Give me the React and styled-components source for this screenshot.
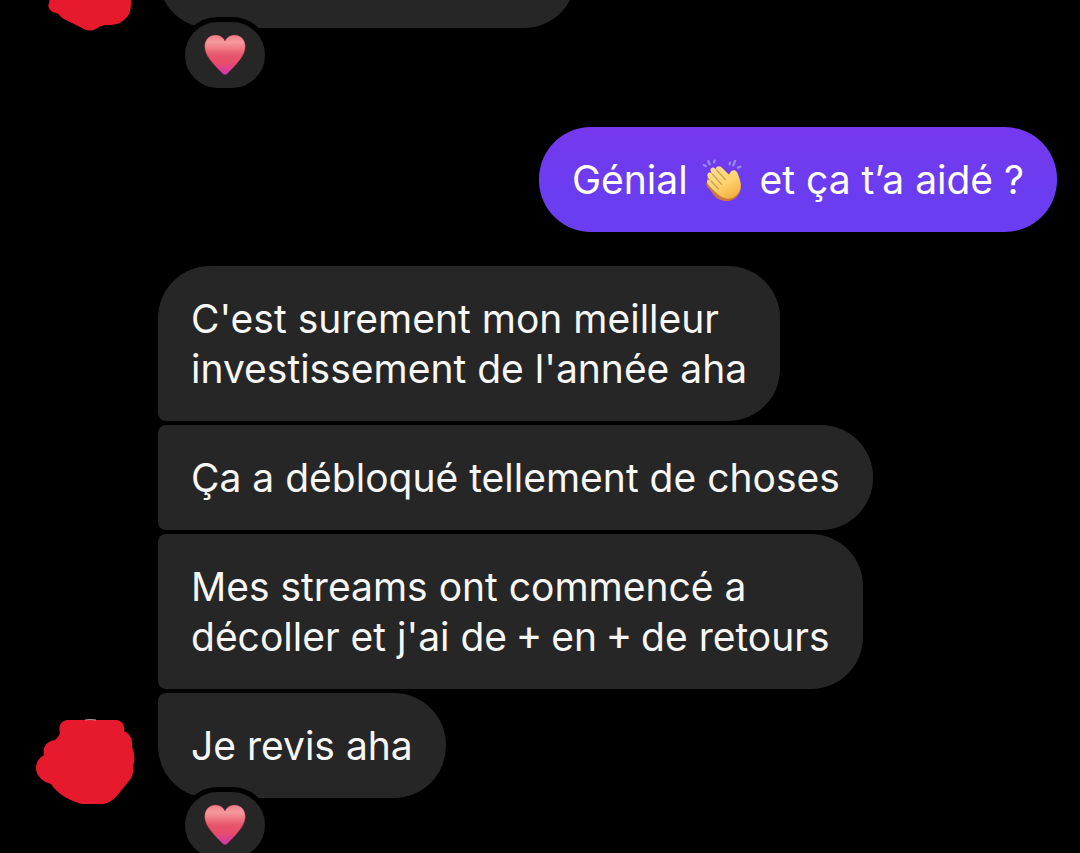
import React from "react";
import styled, { createGlobalStyle, css } from "styled-components";

const GlobalStyle = createGlobalStyle`
  *, *::before, *::after { box-sizing: border-box; }
  html, body { margin: 0; background: #000; }
`;

const Chat = styled.main`
  display: flex;
  flex-direction: column;
  height: 100vh;
  overflow: hidden;
  background: #000;
  color: #f7f7f7;
  font: 400 39px/50px Inter, Roboto, "Liberation Sans", sans-serif;
`;

const Thread = styled.ol`
  display: flex;
  flex-direction: column;
  gap: 34px;
  margin: -77px 0 0;
  padding: 0 23px 0 0;
  list-style: none;
`;

const Group = styled.li`
  display: flex;
  flex-direction: column;
  flex-shrink: 0;
  align-items: ${(p) => (p.$mine ? "flex-end" : "stretch")};
  gap: 4px;
`;

const Row = styled.div`
  display: grid;
  grid-template-columns: 158px 1fr;
  align-items: end;
  justify-items: start;
`;

const Avatar = styled.svg`
  display: block;
  width: 158px;
  height: 105px;
  overflow: visible;
  fill: #e6192d;
`;

const corners = {
  single: "52px",
  first: "52px 52px 52px 8px",
  middle: "8px 52px 52px 8px",
  last: "8px 52px 52px 52px",
};

const Bubble = styled.p`
  grid-column: 2;
  margin: 0;
  padding: 28px 33px 27px;
  min-height: 105px;
  min-width: ${(p) => p.$minWidth || "0"};
  border-radius: ${(p) => corners[p.$place || "single"]};
  background: #262626;
  ${(p) =>
    p.$mine &&
    css`
      background: linear-gradient(#7638ee, #6b3df0 60%);
      color: #fff;
    `}
`;

const Line = styled.span`
  display: block;
`;

const Plus = styled.span`
  font-family: Roboto, Inter, sans-serif;
  line-height: 1;
`;

const Reaction = styled.button`
  grid-column: 2;
  display: flex;
  align-items: center;
  justify-content: center;
  width: 90px;
  height: 76px;
  margin: -11px 0 0 22px;
  padding: 0;
  border: 5px solid #000;
  border-radius: 38px;
  background: #262626;
  z-index: 1;
`;

const HeartIcon = styled.svg`
  width: 42px;
  height: 42px;
`;

const ClapIcon = styled.svg`
  display: inline-block;
  width: 50px;
  height: 48px;
  vertical-align: -10px;
`;

function Heart({ id }) {
  return (
    <HeartIcon viewBox="0 0 126 126" aria-hidden="true">
      <defs>
        <linearGradient id={id} x1="0" y1="0" x2="0" y2="1">
          <stop offset="0" stopColor="#ee7c85" />
          <stop offset="0.18" stopColor="#f59a9c" />
          <stop offset="0.36" stopColor="#ee7480" />
          <stop offset="0.5" stopColor="#e5566c" />
          <stop offset="0.7" stopColor="#e74d6a" />
          <stop offset="0.86" stopColor="#dc3f93" />
          <stop offset="1" stopColor="#c93bb0" />
        </linearGradient>
      </defs>
      <path
        d="M63 21C57 8 46 3 33 3C15 3 2 18 2 37C2 57 14 74 29 91C39 102 49 112 57 120Q63 125 69 120C77 112 87 102 97 91C112 74 124 57 124 37C124 18 111 3 93 3C80 3 69 8 63 21Z"
        fill={`url(#${id})`}
        stroke="#8f2138"
        strokeOpacity="0.4"
        strokeWidth="3"
      />
    </HeartIcon>
  );
}

function Clap() {
  return (
    <ClapIcon viewBox="0 6 150 144" role="img" aria-label="applaudissements">
      <defs>
        <linearGradient id="clap-skin" x1="0.2" y1="0.1" x2="0.7" y2="1">
          <stop offset="0" stopColor="#fbdc8c" />
          <stop offset="0.5" stopColor="#fdd470" />
          <stop offset="1" stopColor="#f3b13f" />
        </linearGradient>
      </defs>
      <g fill="none" stroke="#9a8ae6" strokeWidth="7" strokeLinecap="round">
        <path d="M14 33L20 36M28 21L32 31M47 20L45 25M93 26L92 31M108 21L103 34M124 38L117 41" />
      </g>
      <path
        d="M25 64L24 84C19 91 24 98 32 106L46 126C58 138 76 144 94 140C114 134 126 116 125 96L118 70L60 50Z"
        fill="#c9773a"
      />
      <path
        d="M54 38C61 34 67 38 73 45L90 62C94 54 99 47 107 49C114 51 117 60 121 72C127 88 128 104 119 117C109 132 88 139 70 130C58 124 47 112 34 99C25 90 21 82 27 78C31 76 34 79 37 83C28 72 21 62 28 57C33 53 38 58 42 63C34 53 32 45 38 42C44 38 50 44 55 50C50 44 50 40 54 38Z"
        fill="url(#clap-skin)"
      />
      <path
        d="M54 49L79 77M41 61L68 91M36 81L58 104"
        fill="none"
        stroke="#d29a50"
        strokeWidth="4"
        strokeLinecap="round"
      />
    </ClapIcon>
  );
}

function HeartReaction({ id }) {
  return (
    <Reaction type="button" aria-label="Réaction : cœur">
      <Heart id={id} />
    </Reaction>
  );
}

export default function App() {
  return (
    <>
      <GlobalStyle />
      <Chat>
        <Thread>
          <Group>
            <Row>
              <Avatar viewBox="0 0 158 105" aria-hidden="true">
                <path d="M60 28H120L130 72C132 80 131 90 127 94C122 100 116 102 109 102C102 102 99 104 96 106C92 108 88 108 84 106L64 96C60 94 59 90 56 90C50 89 47 84 49 80Z" />
              </Avatar>
              <Bubble $minWidth="418px" />
              <HeartReaction id="heart-top" />
            </Row>
          </Group>
          <Group $mine>
            <Bubble $mine>
              Génial <Clap /> et ça t’a aidé ?
            </Bubble>
          </Group>
          <Group>
            <Row>
              <Bubble $place="first">
                <Line>C'est surement mon meilleur</Line>
                <Line>investissement de l'année aha</Line>
              </Bubble>
            </Row>
            <Row>
              <Bubble $place="middle">Ça a débloqué tellement de choses</Bubble>
            </Row>
            <Row>
              <Bubble $place="middle">
                <Line>Mes streams ont commencé a</Line>
                <Line>
                  décoller et j'ai de <Plus>+</Plus> en <Plus>+</Plus> de retours
                </Line>
              </Bubble>
            </Row>
            <Row>
              <Avatar viewBox="0 0 158 105" aria-hidden="true">
                <path d="M67 27H117C122 28 125 32 124 38C130 41 133 46 132 54C135 61 135 68 133 73C134 80 132 85 128 89L116 104C110 109 107 111 101 111H82C73 109 58 102 51 91C43 89 36 83 36 75C36 69 39 65 44 62C42 54 47 48 55 47C57 45 59 43 60 40C58 33 61 28 67 27Z" />
                <path
                  d="M85 27Q90 26 96 27"
                  fill="none"
                  stroke="#b9a7a5"
                  strokeWidth="1"
                />
              </Avatar>
              <Bubble $place="last">Je revis aha</Bubble>
              <HeartReaction id="heart-bottom" />
            </Row>
          </Group>
        </Thread>
      </Chat>
    </>
  );
}
